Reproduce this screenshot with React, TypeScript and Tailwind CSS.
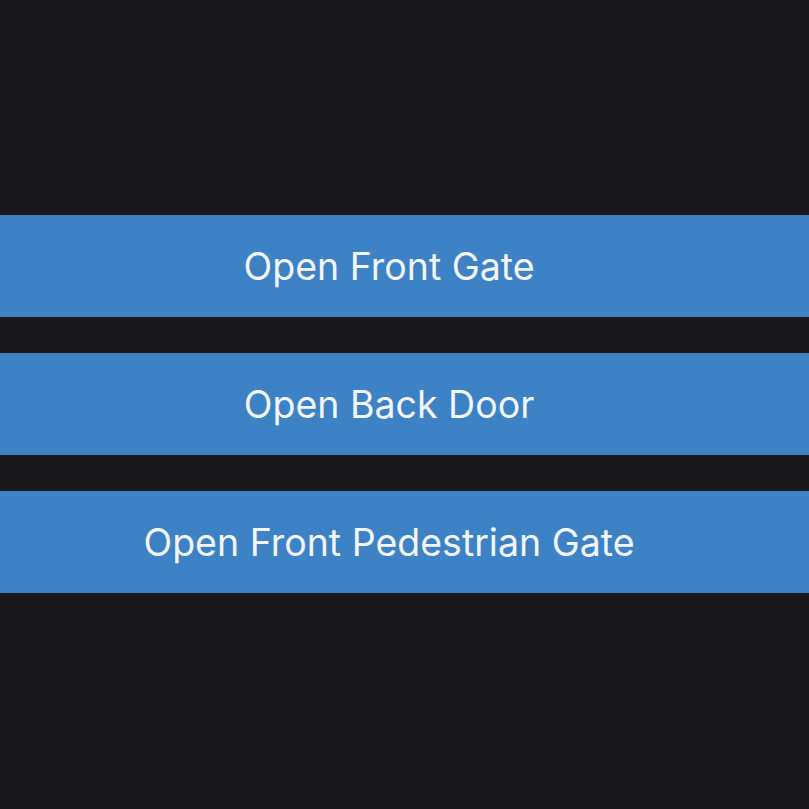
const actions = ["Open Front Gate", "Open Back Door", "Open Front Pedestrian Gate"];

export default function App() {
  return (
    <div className="min-h-screen bg-[#18181a] flex flex-col justify-center gap-[36px] pb-px">
      {actions.map((label) => (
        <button
          key={label}
          className="h-[102px] w-full bg-[#3d82c4] text-[#f2f5f9] text-[37.5px] pr-[31px] pt-[3px] flex items-center justify-center"
          style={{ fontFamily: "Inter, 'Noto Sans', sans-serif" }}
        >
          {label}
        </button>
      ))}
    </div>
  );
}
